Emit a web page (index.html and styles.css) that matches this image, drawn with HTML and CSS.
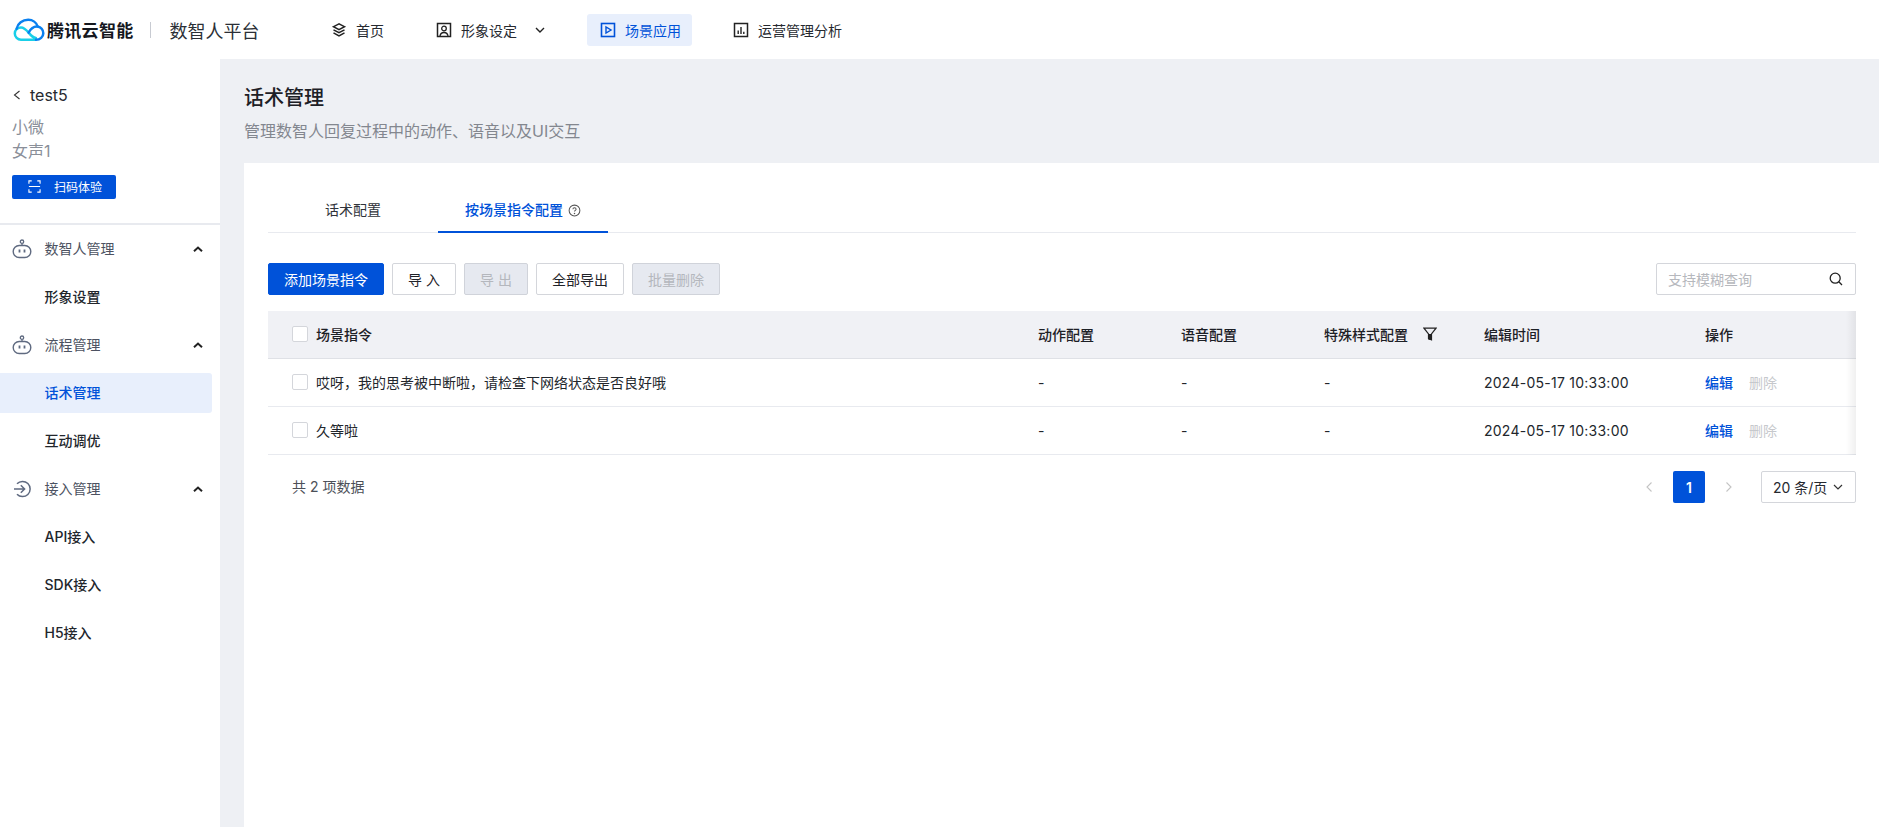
FILE: index.html
```html
<!DOCTYPE html>
<html lang="zh-CN">
<head>
<meta charset="utf-8">
<title>话术管理</title>
<link rel="stylesheet" href="styles.css">
</head>
<body>
<header class="topbar">
  <div class="logo">
    <svg class="logo-mark" viewBox="0 0 32 24" aria-hidden="true">
      <path d="M22.500 21.800H8a6.200 6.200 0 1 1 0-12.400c3.400 0 5.400 2.500 7.600 5.200 2 2.500 4 5 7.300 5.400" fill="none" stroke="#19cfe8" stroke-width="2.500" stroke-linecap="round"/>
      <path d="M3.600 10.800C4.600 5.600 9.600 1.800 15.200 1.800c4.500 0 8.300 2.700 9.500 6.700 3.200.7 5.600 3.500 5.600 6.800 0 3.600-3.200 6.500-7.300 6.500" fill="none" stroke="#0a80f0" stroke-width="2.500" stroke-linecap="round"/>
      <path d="M24.700 8.500c-4-.5-6.800 1.800-9.100 6.100" fill="none" stroke="#0a80f0" stroke-width="2.500" stroke-linecap="round"/>
    </svg>
    <span class="logo-text">腾讯云智能</span>
    <span class="logo-divider"></span>
    <span class="logo-product">数智人平台</span>
  </div>
  <nav class="nav">
    <a class="nav-item">
      <svg class="ico" viewBox="0 0 16 16"><path d="M8 1.800 2.500 4.700 8 7.600l5.500-2.900zM2.500 7.800 8 10.700l5.500-2.900M2.500 10.900 8 13.900l5.500-3" fill="none" stroke="#222" stroke-width="1.500"/></svg>
      <span>首页</span>
    </a>
    <a class="nav-item nav-item-wide">
      <svg class="ico" viewBox="0 0 16 16"><rect x="1.500" y="1.500" width="13" height="13" fill="none" stroke="#222" stroke-width="1.500"/><circle cx="8" cy="6.500" r="2.300" fill="none" stroke="#222" stroke-width="1.300"/><path d="M4 14c.4-2.400 2-3.500 4-3.500s3.600 1.100 4 3.500" fill="none" stroke="#222" stroke-width="1.300"/></svg>
      <span>形象设定</span>
      <svg class="nav-caret" viewBox="0 0 10 6"><path d="M1 1l4 4 4-4" fill="none" stroke="#222" stroke-width="1.400"/></svg>
    </a>
    <a class="nav-item is-active">
      <svg class="ico" viewBox="0 0 16 16"><rect x="1.500" y="1.500" width="13" height="13" fill="none" stroke="#0052d9" stroke-width="1.600"/><path d="M6 5v6l5-3z" fill="none" stroke="#0052d9" stroke-width="1.400"/></svg>
      <span>场景应用</span>
    </a>
    <a class="nav-item nav-item-last">
      <svg class="ico" viewBox="0 0 16 16"><rect x="1.500" y="1.500" width="13" height="13" fill="none" stroke="#222" stroke-width="1.500"/><path d="M5.200 12V8.500M8 12V5M10.800 12V9.800" fill="none" stroke="#222" stroke-width="1.400"/></svg>
      <span>运营管理分析</span>
    </a>
  </nav>
</header>

<div class="shell">
  <aside class="sidebar">
    <div class="agent">
      <div class="agent-back">
        <svg class="agent-chevron" viewBox="0 0 8 12"><path d="M6.500 2 1.500 6l5 4" fill="none" stroke="#333" stroke-width="1.100"/></svg>
        <span>test5</span>
      </div>
      <div class="agent-meta">小微</div>
      <div class="agent-meta">女声1</div>
      <button class="scan-btn">
        <svg class="scan-ico" viewBox="0 0 14 14"><path d="M1 4V1h3M10 1h3v3M13 10v3h-3M4 13H1v-3M1 7h12" fill="none" stroke="#fff" stroke-width="1.200"/></svg>
        <span>扫码体验</span>
      </button>
    </div>
    <div class="menu">
      <div class="menu-group">
        <svg class="menu-ico" viewBox="0 0 20 20"><circle cx="10" cy="2.700" r="1.700" fill="none" stroke="#5f6a80" stroke-width="1.300"/><path d="M10 4.400V6.500" stroke="#5f6a80" stroke-width="1.300"/><rect x="1.200" y="6.500" width="17.600" height="12" rx="6" fill="none" stroke="#5f6a80" stroke-width="1.400"/><path d="M7.500 10.500v3M12.500 10.500v3" stroke="#5f6a80" stroke-width="1.800"/></svg>
        <span class="menu-title">数智人管理</span>
        <svg class="menu-caret" viewBox="0 0 10 6"><path d="M1 5.200l4-3.700 4 3.700" fill="none" stroke="#222" stroke-width="2"/></svg>
      </div>
      <div class="menu-sub">形象设置</div>
      <div class="menu-group">
        <svg class="menu-ico" viewBox="0 0 20 20"><circle cx="10" cy="2.700" r="1.700" fill="none" stroke="#5f6a80" stroke-width="1.300"/><path d="M10 4.400V6.500" stroke="#5f6a80" stroke-width="1.300"/><rect x="1.200" y="6.500" width="17.600" height="12" rx="6" fill="none" stroke="#5f6a80" stroke-width="1.400"/><path d="M7.500 10.500v3M12.500 10.500v3" stroke="#5f6a80" stroke-width="1.800"/></svg>
        <span class="menu-title">流程管理</span>
        <svg class="menu-caret" viewBox="0 0 10 6"><path d="M1 5.200l4-3.700 4 3.700" fill="none" stroke="#222" stroke-width="2"/></svg>
      </div>
      <div class="menu-sub is-active">话术管理</div>
      <div class="menu-sub">互动调优</div>
      <div class="menu-group">
        <svg class="menu-ico" viewBox="0 0 20 20"><path d="M5 4.800A7.600 7.600 0 1 1 5 15.200M2 10h10.500M8.800 6.200 12.600 10l-3.800 3.800" fill="none" stroke="#5f6a80" stroke-width="1.500"/></svg>
        <span class="menu-title">接入管理</span>
        <svg class="menu-caret" viewBox="0 0 10 6"><path d="M1 5.200l4-3.700 4 3.700" fill="none" stroke="#222" stroke-width="2"/></svg>
      </div>
      <div class="menu-sub">API接入</div>
      <div class="menu-sub">SDK接入</div>
      <div class="menu-sub">H5接入</div>
    </div>
  </aside>

  <main class="main">
    <div class="page-head">
      <h1 class="page-title">话术管理</h1>
      <p class="page-desc">管理数智人回复过程中的动作、语音以及UI交互</p>
    </div>
    <section class="card">
      <div class="tabs">
        <div class="tab">话术配置</div>
        <div class="tab is-active">
          <span>按场景指令配置</span>
          <svg class="tab-help" viewBox="0 0 14 14"><circle cx="7" cy="7" r="5.800" fill="none" stroke="#555" stroke-width="1.100"/><path d="M5.300 5.700c0-1 .8-1.600 1.700-1.600s1.700.6 1.700 1.500c0 1.300-1.700 1.300-1.700 2.600" fill="none" stroke="#555" stroke-width="1.100"/><circle cx="7" cy="10.200" r=".8" fill="#555"/></svg>
        </div>
      </div>
      <div class="toolbar">
        <button class="btn btn-primary">添加场景指令</button>
        <button class="btn btn-narrow">导 入</button>
        <button class="btn btn-narrow btn-disabled">导 出</button>
        <button class="btn">全部导出</button>
        <button class="btn btn-disabled">批量删除</button>
        <div class="search">
          <span class="search-text">支持模糊查询</span>
          <svg class="search-ico" viewBox="0 0 16 16"><circle cx="7.200" cy="7.200" r="5" fill="none" stroke="#222" stroke-width="1.300"/><path d="M10.800 10.800 14 14" stroke="#222" stroke-width="1.300"/></svg>
        </div>
      </div>
      <div class="table">
        <div class="row row-head">
          <div class="cell cell-first"><span class="check"></span><span>场景指令</span></div>
          <div class="cell">动作配置</div>
          <div class="cell">语音配置</div>
          <div class="cell">特殊样式配置
            <svg class="filter" viewBox="0 0 14 14"><path d="M1 1.200h12L8.500 7v5.800L5.500 11.500V7z" fill="none" stroke="#222" stroke-width="1.200"/><path d="M5.500 7h3v5.800h-3z" fill="#222"/></svg>
          </div>
          <div class="cell">编辑时间</div>
          <div class="cell">操作</div>
        </div>
        <div class="row">
          <div class="cell cell-first"><span class="check"></span><span>哎呀，我的思考被中断啦，请检查下网络状态是否良好哦</span></div>
          <div class="cell">-</div>
          <div class="cell">-</div>
          <div class="cell">-</div>
          <div class="cell cell-time">2024-05-17 10:33:00</div>
          <div class="cell"><a class="link">编辑</a><a class="link link-off">删除</a></div>
        </div>
        <div class="row">
          <div class="cell cell-first"><span class="check"></span><span>久等啦</span></div>
          <div class="cell">-</div>
          <div class="cell">-</div>
          <div class="cell">-</div>
          <div class="cell cell-time">2024-05-17 10:33:00</div>
          <div class="cell"><a class="link">编辑</a><a class="link link-off">删除</a></div>
        </div>
      </div>
      <div class="pager">
        <span class="pager-total">共 2 项数据</span>
        <div class="pager-nav">
          <svg class="pager-arrow" viewBox="0 0 8 12"><path d="M6.500 1.500 2 6l4.500 4.500" fill="none" stroke="#c4c4c4" stroke-width="1.100"/></svg>
          <span class="pager-num">1</span>
          <svg class="pager-arrow" viewBox="0 0 8 12"><path d="M1.500 1.500 6 6l-4.500 4.500" fill="none" stroke="#c4c4c4" stroke-width="1.100"/></svg>
        </div>
        <div class="pager-size">
          <span>20 条/页</span>
          <svg class="pager-caret" viewBox="0 0 10 6"><path d="M1 1l4 4 4-4" fill="none" stroke="#333" stroke-width="1.200"/></svg>
        </div>
      </div>
    </section>
  </main>
</div>
</body>
</html>
```
FILE: styles.css
```css
* { box-sizing: border-box; }
html, body { height: 100%; }
body {
  margin: 0;
  height: 827px;
  overflow: hidden;
  background: #fff;
  color: #1f2329;
  font-family: "Inter", "Noto Sans CJK SC", sans-serif;
  font-size: 14px;
}
button { font-family: inherit; }

.topbar {
  height: 59px;
  display: flex;
  align-items: center;
  background: #fff;
}
.logo { display: flex; align-items: center; margin-left: 13px; width: 305px; }
.logo-mark { flex: none; width: 32px; height: 24px; }
.logo-text { margin-left: 2px; font-size: 17px; letter-spacing: .3px; font-weight: 600; color: #15181e; white-space: nowrap; }
.logo-divider { width: 1px; height: 16px; background: #c8cbd2; margin: 0 19px 0 16px; }
.logo-product { font-size: 18px; color: #2b2f36; white-space: nowrap; }

.nav { display: flex; align-items: center; gap: 28px; }
.nav-item {
  display: flex;
  align-items: center;
  gap: 9px;
  height: 32px;
  padding: 0 11px 0 13px;
  border-radius: 3px;
  font-size: 14px;
  color: #26292f;
  white-space: nowrap;
}
.nav-item-wide { padding-right: 14px; }
.nav-item.is-active { background: #e8effc; color: #0052d9; }
.ico { width: 16px; height: 16px; flex: none; }
.nav-caret { width: 10px; height: 6px; margin-left: 9px; }

.shell { display: flex; height: 768px; }
.sidebar { width: 220px; flex: none; background: #fff; }
.agent { height: 166px; padding: 26px 0 0 12px; border-bottom: 2px solid #e8eaef; }
.agent-back { display: flex; align-items: center; gap: 9px; height: 20px; padding-left: 1px; font-size: 16px; color: #26292f; }
.agent-chevron { width: 8px; height: 12px; }
.agent-meta { font-size: 16px; line-height: 24px; color: #8a8f99; }
.agent-back + .agent-meta { margin-top: 10px; }
.scan-btn {
  display: flex;
  align-items: center;
  margin: 12px 0 0;
  padding: 0 0 1px 16px;
  width: 104px;
  height: 24px;
  border: 0;
  border-radius: 2px;
  background: #0052d9;
  color: #fff;
  font-size: 12px;
}
.scan-ico { width: 13px; height: 13px; margin-right: 13px; }

.menu-group, .menu-sub { display: flex; align-items: center; height: 48px; }
.menu-group { padding-left: 12px; color: #4c5261; }
.menu-ico { width: 20px; height: 20px; flex: none; }
.menu-title { margin-left: 12.500px; flex: 1; padding-bottom: 2px; }
.menu-caret { width: 10px; height: 6px; margin-right: 17px; }
.menu-sub { padding: 0 0 2px 44.500px; font-weight: 500; color: #22262c; }
.menu-sub.is-active {
  height: 40px;
  margin: 4px 8px 4px 0;
  background: #e8effc;
  border-radius: 0 3px 3px 0;
  color: #0052d9;
}

.main { flex: 1; min-width: 0; background: #eef0f4; }
.page-head { height: 104px; padding: 25px 0 0 24px; }
.page-title { margin: 0; font-size: 20px; line-height: 28px; font-weight: 500; color: #1d2026; }
.page-desc { margin: 7px 0 0; font-size: 16px; line-height: 24px; color: #83878f; }

.card { margin-left: 24px; height: 664px; padding: 0 23px 0 24px; background: #fff; }
.tabs { display: flex; height: 70px; border-bottom: 1px solid #e8eaef; }
.tab {
  width: 170px;
  height: 70px;
  display: flex;
  align-items: center;
  justify-content: center;
  gap: 5px;
  padding-top: 22px;
  color: #2f333a;
}
.tab.is-active { border-bottom: 2px solid #0052d9; color: #0052d9; font-weight: 500; padding-top: 24px; }
.tab-help { width: 13px; height: 13px; margin-top: 3px; }

.toolbar { display: flex; align-items: center; gap: 8px; margin-top: 30px; }
.btn {
  height: 32px;
  width: 88px;
  padding: 0;
  border: 1px solid #d4d6db;
  border-radius: 2px;
  background: #fff;
  color: #1f2329;
  font-size: 14px;
}
.btn-primary { width: 116px; background: #0052d9; border-color: #0052d9; color: #fff; }
.btn-narrow { width: 64px; }
.btn-disabled { background: #e6e9f0; border-color: #d0d3da; color: #b4b7bd; }
.search {
  margin-left: auto;
  width: 200px;
  height: 32px;
  display: flex;
  align-items: center;
  justify-content: space-between;
  padding: 0 11px;
  border: 1px solid #d4d6db;
  border-radius: 2px;
  color: #b6b8bd;
}
.search-ico { width: 16px; height: 16px; }

.table { margin-top: 16px; position: relative; }
.table::after {
  content: "";
  position: absolute;
  top: 0;
  bottom: 0;
  right: 0;
  width: 10px;
  background: linear-gradient(to right, rgba(0,0,0,0), rgba(0,0,0,.06));
}
.row {
  display: grid;
  grid-template-columns: 746px 143px 143px 160px 221px 1fr;
  height: 48px;
  border-bottom: 1px solid #e8eaef;
}
.row-head { background: #f0f1f5; border-bottom-color: #dfe1e6; font-weight: 500; color: #1d2026; }
.cell { display: flex; align-items: center; padding: 0 0 1px 24px; white-space: nowrap; color: #22262c; }
.cell-time { letter-spacing: .25px; }
.row-head .cell { color: #1d2026; }
.cell-first { gap: 8px; }
.check { width: 16px; height: 16px; flex: none; background: #fff; border: 1px solid #d4d6db; border-radius: 2px; }
.filter { width: 14px; height: 14px; margin-left: 15px; }
.link { color: #0052d9; font-weight: 500; margin-right: 16px; }
.link-off { color: #c6c8cc; font-weight: 400; }

.pager { display: flex; align-items: center; margin-top: 16px; padding-left: 24px; height: 32px; }
.pager-total { flex: 1; padding-bottom: 2px; color: #4c5058; }
.pager-nav { display: flex; align-items: center; gap: 20px; }
.pager-arrow { width: 8px; height: 12px; }
.pager-num {
  width: 32px;
  height: 32px;
  display: flex;
  align-items: center;
  justify-content: center;
  background: #0052d9;
  border-radius: 2px;
  color: #fff;
  font-weight: 600;
}
.pager-size {
  margin-left: 28px;
  width: 95px;
  height: 32px;
  display: flex;
  align-items: center;
  justify-content: space-between;
  padding: 0 12px 0 11px;
  border: 1px solid #d4d6db;
  border-radius: 2px;
  color: #26292f;
  white-space: nowrap;
}
.pager-caret { width: 10px; height: 6px; }
```
